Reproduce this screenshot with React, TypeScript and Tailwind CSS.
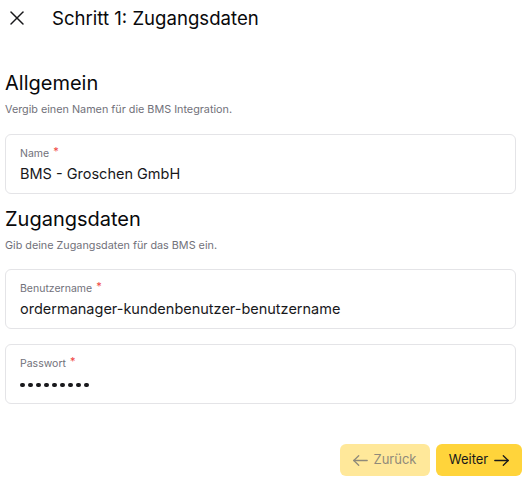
import { X } from "lucide-react"

const FONT = { fontFamily: "Inter, 'Noto Sans', sans-serif" }

function Arrow({ left }: { left?: boolean }) {
  return (
    <svg
      width="15"
      height="11"
      viewBox="0 0 15 11"
      fill="none"
      stroke="currentColor"
      strokeWidth="1.3"
      strokeLinecap="round"
      strokeLinejoin="round"
      className={left ? "rotate-180" : ""}
    >
      <path d="M0.8 5.5H14.2" />
      <path d="M9.3 0.8L14.2 5.5L9.3 10.2" />
    </svg>
  )
}

function Field({ label, value, secret }: { label: string; value: string; secret?: boolean }) {
  return (
    <div className="flex h-[60px] w-[511px] flex-col gap-[4px] rounded-md border border-[#e4e4e7] bg-white px-[14px] pt-[13px]">
      <div className="flex h-[12px] items-center text-[10.5px] leading-[12px] text-[#71717a]">
        {label}
        <span className="ml-[4px] -mt-[6px] text-[11px] text-[#ef4444]">*</span>
      </div>
      {secret ? (
        <div className="flex h-[20px] items-center gap-[3.5px] pt-[2px]">
          {Array.from({ length: 9 }).map((_, i) => (
            <span key={i} className="h-[4.5px] w-[4.5px] rounded-full bg-[#18181b]" />
          ))}
        </div>
      ) : (
        <div className="text-[14.5px] leading-[20px] text-[#18181b]">{value}</div>
      )}
    </div>
  )
}

function Section({ title, hint }: { title: string; hint: string }) {
  return (
    <div className="flex flex-col gap-[5px]">
      <h2 className="text-[20px] leading-[28px] text-[#09090b]">{title}</h2>
      <p className="text-[10.8px] leading-[16px] text-[#71717a]">{hint}</p>
    </div>
  )
}

export default function App() {
  return (
    <div className="h-[481px] w-[526px] bg-white" style={FONT}>
      <div className="flex h-[36px] items-center pl-[5px]">
        <X size={24} strokeWidth={1.5} className="text-[#18181b]" />
        <span className="ml-[23px] text-[18.6px] leading-[24px] text-[#09090b]">Schritt 1: Zugangsdaten</span>
      </div>

      <div className="flex flex-col px-[5px] pt-[33px]">
        <Section title="Allgemein" hint="Vergib einen Namen für die BMS Integration." />
        <div className="mt-[16px]">
          <Field label="Name" value="BMS - Groschen GmbH" />
        </div>

        <div className="mt-[11px]">
          <Section title="Zugangsdaten" hint="Gib deine Zugangsdaten für das BMS ein." />
        </div>
        <div className="mt-[15px] flex flex-col gap-[15px]">
          <Field label="Benutzername" value="ordermanager-kundenbenutzer-benutzername" />
          <Field label="Passwort" value="" secret />
        </div>
      </div>

      <div className="mt-[40px] flex justify-end gap-[6px] pr-[4px]">
        <button className="flex h-[32px] w-[90px] items-center justify-center gap-[5px] rounded-md bg-[#ffe89a] text-[13px] text-[#8f8a7a]">
          <Arrow left />
          Zurück
        </button>
        <button className="flex h-[32px] w-[86px] items-center justify-center gap-[6px] rounded-md bg-[#ffd43b] text-[13px] text-[#18181b]">
          Weiter
          <Arrow />
        </button>
      </div>
    </div>
  )
}
